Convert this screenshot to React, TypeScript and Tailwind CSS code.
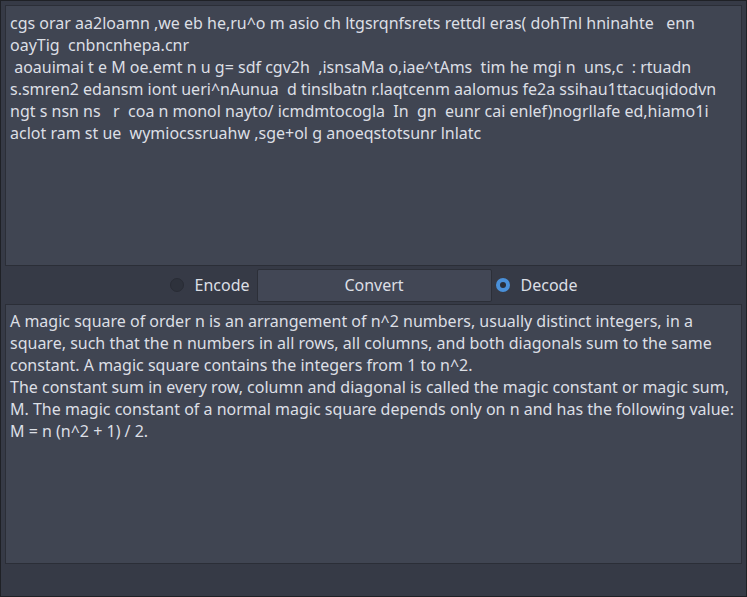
import { useState } from "react";

const encoded = [
  "cgs orar aa2loamn ,we eb he,ru^o m asio ch ltgsrqnfsrets rettdl eras( dohTnl hninahte   enn",
  "oayTig  cnbncnhepa.cnr",
  " aoauimai t e M oe.emt n u g= sdf cgv2h  ,isnsaMa o,iae^tAms  tim he mgi n  uns,c  : rtuadn",
  "s.smren2 edansm iont ueri^nAunua  d tinslbatn r.laqtcenm aalomus fe2a ssihau1ttacuqidodvn",
  "ngt s nsn ns   r  coa n monol nayto/ icmdmtocogla  In  gn  eunr cai enlef)nogrllafe ed,hiamo1i",
  "aclot ram st ue  wymiocssruahw ,sge+ol g anoeqstotsunr lnlatc",
].join("\n");

const decoded = [
  "A magic square of order n is an arrangement of n^2 numbers, usually distinct integers, in a",
  "square, such that the n numbers in all rows, all columns, and both diagonals sum to the same",
  "constant. A magic square contains the integers from 1 to n^2.",
  "The constant sum in every row, column and diagonal is called the magic constant or magic sum,",
  "M. The magic constant of a normal magic square depends only on n and has the following value:",
  "M = n (n^2 + 1) / 2.",
].join("\n");

function Radio({ label, checked, onClick }: { label: string; checked: boolean; onClick: () => void }) {
  return (
    <button type="button" onClick={onClick} className="flex items-center gap-[11px]">
      {checked ? (
        <span className="w-[14px] h-[14px] rounded-full bg-[#4a90d9] flex items-center justify-center">
          <span className="w-[6px] h-[6px] rounded-full bg-[#2b2f39]" />
        </span>
      ) : (
        <span className="w-[14px] h-[14px] rounded-full bg-[#2e323c] border border-[#292c35]" />
      )}
      <span>{label}</span>
    </button>
  );
}

export default function App() {
  const [mode, setMode] = useState<"encode" | "decode">("decode");

  return (
    <div className="w-[747px] h-[597px] bg-[#363a46] border border-[#1f2126] text-[#dcdfe5] text-[16px] leading-[22px] font-['Noto_Sans',sans-serif] flex flex-col p-[4px] pb-[32px]">
      <div className="h-[261px] bg-[#404552] border border-[#2b2e37] pl-[4px] pt-[6px] overflow-hidden whitespace-pre">
        {encoded}
      </div>
      <div className="h-[38px] flex items-center justify-center">
        <Radio label="Encode" checked={mode === "encode"} onClick={() => setMode("encode")} />
        <button
          type="button"
          className="ml-[7px] mr-[4px] w-[235px] h-[33px] bg-[#424755] border border-[#2c2f38] rounded-[2px]"
        >
          Convert
        </button>
        <Radio label="Decode" checked={mode === "decode"} onClick={() => setMode("decode")} />
      </div>
      <div className="flex-1 bg-[#404552] border border-[#2b2e37] pl-[4px] pt-[5px] overflow-hidden whitespace-pre">
        {decoded}
      </div>
    </div>
  );
}
